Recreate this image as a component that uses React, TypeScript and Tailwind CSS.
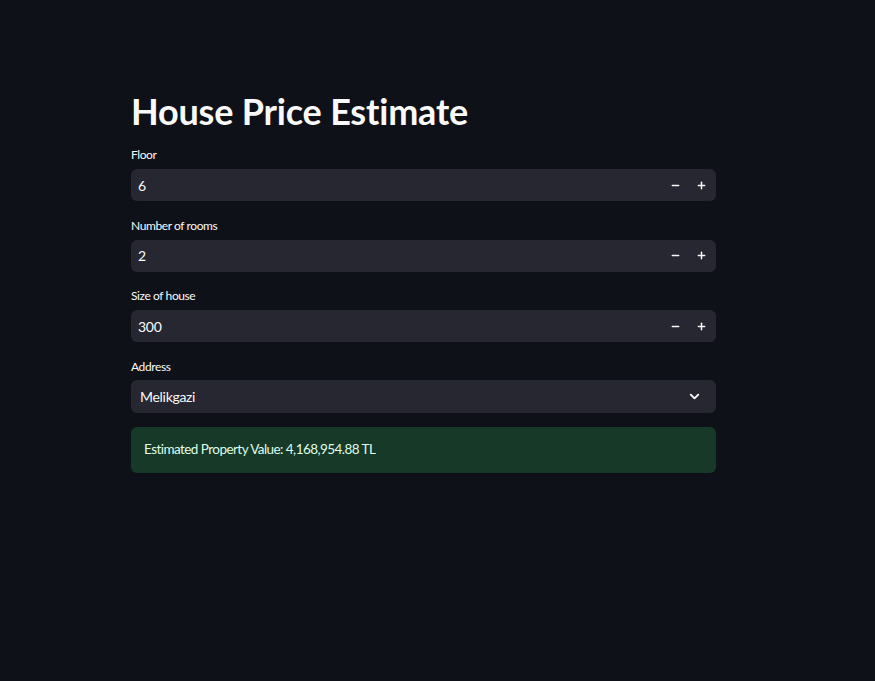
import { Minus, Plus, ChevronDown } from "lucide-react";

const fields = [
  { label: "Floor", value: "6" },
  { label: "Number of rooms", value: "2" },
  { label: "Size of house", value: "300" },
];

function NumberInput({ label, value }: { label: string; value: string }) {
  return (
    <div className="flex flex-col">
      <label className="text-[12px] tracking-[-0.4px] leading-4 mb-[6px] text-[#fafafa]">{label}</label>
      <div className="flex items-center h-8 rounded-md bg-[#262730]">
        <span className="flex-1 pl-[7px] text-[14px] tracking-[-0.3px] text-[#fafafa]">{value}</span>
        <button className="w-[26px] h-8 flex items-center justify-center text-[#fafafa]">
          <Minus size={11} strokeWidth={3.2} />
        </button>
        <button className="w-[26px] h-8 mr-[2px] flex items-center justify-center text-[#fafafa]">
          <Plus size={11} strokeWidth={3.2} />
        </button>
      </div>
    </div>
  );
}

export default function App() {
  return (
    <div
      className="min-h-screen bg-[#0e1117] text-[#fafafa]"
      style={{ fontFamily: '"Source Sans Pro", Lato, "Noto Sans", sans-serif' }}
    >
      <div className="w-[585px] ml-[131px] pt-[87px]">
        <h1 className="text-[36px] tracking-[-0.2px] leading-[48px] font-bold mb-[12px]">House Price Estimate</h1>

        <div className="flex flex-col gap-[16.5px]">
          {fields.map((f) => (
            <NumberInput key={f.label} label={f.label} value={f.value} />
          ))}

          <div className="flex flex-col">
            <label className="text-[12px] tracking-[-0.4px] leading-4 mb-[5px]">Address</label>
            <div className="flex items-center h-[33px] rounded-md bg-[#262730] pl-[9px] pr-[10px]">
              <span className="flex-1 text-[14px] tracking-[-0.3px]">Melikgazi</span>
              <ChevronDown size={15} strokeWidth={3} className="mr-[4px]" />
            </div>
          </div>
        </div>

        <div className="mt-[14px] h-[46px] rounded-md bg-[#173928] flex items-center px-[13px] text-[13.5px] tracking-[-0.55px] text-[#dffde9]">
          Estimated Property Value: 4,168,954.88 TL
        </div>
      </div>
    </div>
  );
}
